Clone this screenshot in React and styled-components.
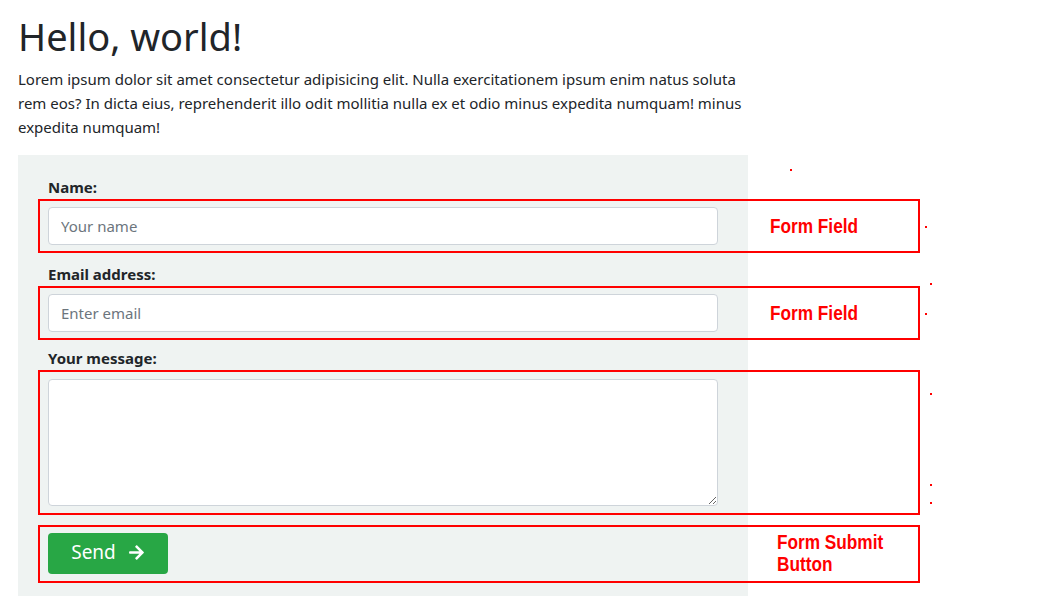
import React from "react";
import styled, { createGlobalStyle } from "styled-components";
import { FaArrowRight } from "react-icons/fa";

const GlobalStyle = createGlobalStyle`
  body {
    margin: 0;
    background: #fff;
    color: #212529;
    font-family: "Noto Sans", "Open Sans", sans-serif;
  }
`;

const Page = styled.div`
  position: relative;
  padding: 12px 18px 0;
  height: 596px;
  overflow: hidden;
  box-sizing: border-box;
`;

const Title = styled.h1`
  margin: 0 0 7px;
  font-size: 38px;
  font-weight: 400;
  line-height: 48px;
`;

const Intro = styled.p`
  margin: 0 0 16px;
  width: 730px;
  font-size: 15px;
  line-height: 24px;
`;

const Panel = styled.div`
  width: 730px;
  box-sizing: border-box;
  background: #eff3f2;
  padding: 20px 0 40px 20px;
`;

const Label = styled.label`
  display: block;
  padding-left: 10px;
  margin-top: ${p => p.$top || "9px"};
  font-size: 15px;
  font-weight: 700;
  line-height: 24px;
`;

const Outline = styled.div`
  width: 882px;
  box-sizing: border-box;
  border: 2px solid #ff0000;
  padding: ${p => p.$pad || "6px 8px"};
  display: flex;
  align-items: center;
  margin-top: ${p => p.$gap || 0};
`;

const Input = styled.input`
  flex-shrink: 0;
  width: 670px;
  height: 38px;
  box-sizing: border-box;
  border: 1px solid #ced4da;
  border-radius: 4px;
  padding: 6px 12px;
  font-family: inherit;
  font-size: 15px;
  color: #495057;
  background: #fff;
  &::placeholder {
    color: #6c757d;
  }
`;

const TextArea = styled.textarea`
  flex-shrink: 0;
  width: 670px;
  height: 127px;
  box-sizing: border-box;
  border: 1px solid #ced4da;
  border-radius: 4px;
  padding: 6px 12px;
  font-family: inherit;
  font-size: 15px;
  background: #fff;
  display: block;
`;

const Note = styled.div`
  flex-shrink: 0;
  margin-left: ${p => p.$offset || "52px"};
  color: #ff0000;
  font-family: "Liberation Sans", Arial, sans-serif;
  font-weight: 700;
  font-size: 21px;
  line-height: 22px;
  width: 135px;
  transform: scaleX(0.82);
  transform-origin: left center;
`;

const SendButton = styled.button`
  flex-shrink: 0;
  width: 120px;
  height: 41px;
  border: none;
  border-radius: 4px;
  background: #28a745;
  color: #fff;
  font-family: inherit;
  font-size: 19px;
  display: flex;
  align-items: center;
  justify-content: center;
  gap: 12px;
  padding: 0 0 2px;
  svg {
    font-size: 17px;
  }
`;

const Dot = styled.span`
  position: absolute;
  width: 2px;
  height: 2px;
  background: #ff0000;
`;

const dots = [
  [790, 169], [925, 226], [930, 283], [925, 313],
  [930, 393], [930, 484], [930, 502]
];

export default function App() {
  return (
    <>
      <GlobalStyle />
      <Page>
        <Title>Hello, world!</Title>
        <Intro>
          Lorem ipsum dolor sit amet consectetur adipisicing elit. Nulla
          exercitationem ipsum enim natus soluta rem eos? In dicta eius,
          reprehenderit illo odit mollitia nulla ex et odio minus expedita
          numquam! minus expedita numquam!
        </Intro>
        <Panel>
          <Label $top="0" htmlFor="name">Name:</Label>
          <Outline>
            <Input id="name" placeholder="Your name" />
            <Note>Form Field</Note>
          </Outline>
          <Label htmlFor="email">Email address:</Label>
          <Outline>
            <Input id="email" type="email" placeholder="Enter email" />
            <Note>Form Field</Note>
          </Outline>
          <Label $top="6px" htmlFor="msg">Your message:</Label>
          <Outline $pad="7px 8px">
            <TextArea id="msg" />
          </Outline>
          <Outline $pad="4px 8px 6px" $gap="10px">
            <SendButton type="button">
              Send <FaArrowRight />
            </SendButton>
            <Note $offset="609px">Form Submit Button</Note>
          </Outline>
        </Panel>
        {dots.map(([x, y]) => (
          <Dot key={`${x}-${y}`} style={{ left: x, top: y }} />
        ))}
      </Page>
    </>
  );
}
